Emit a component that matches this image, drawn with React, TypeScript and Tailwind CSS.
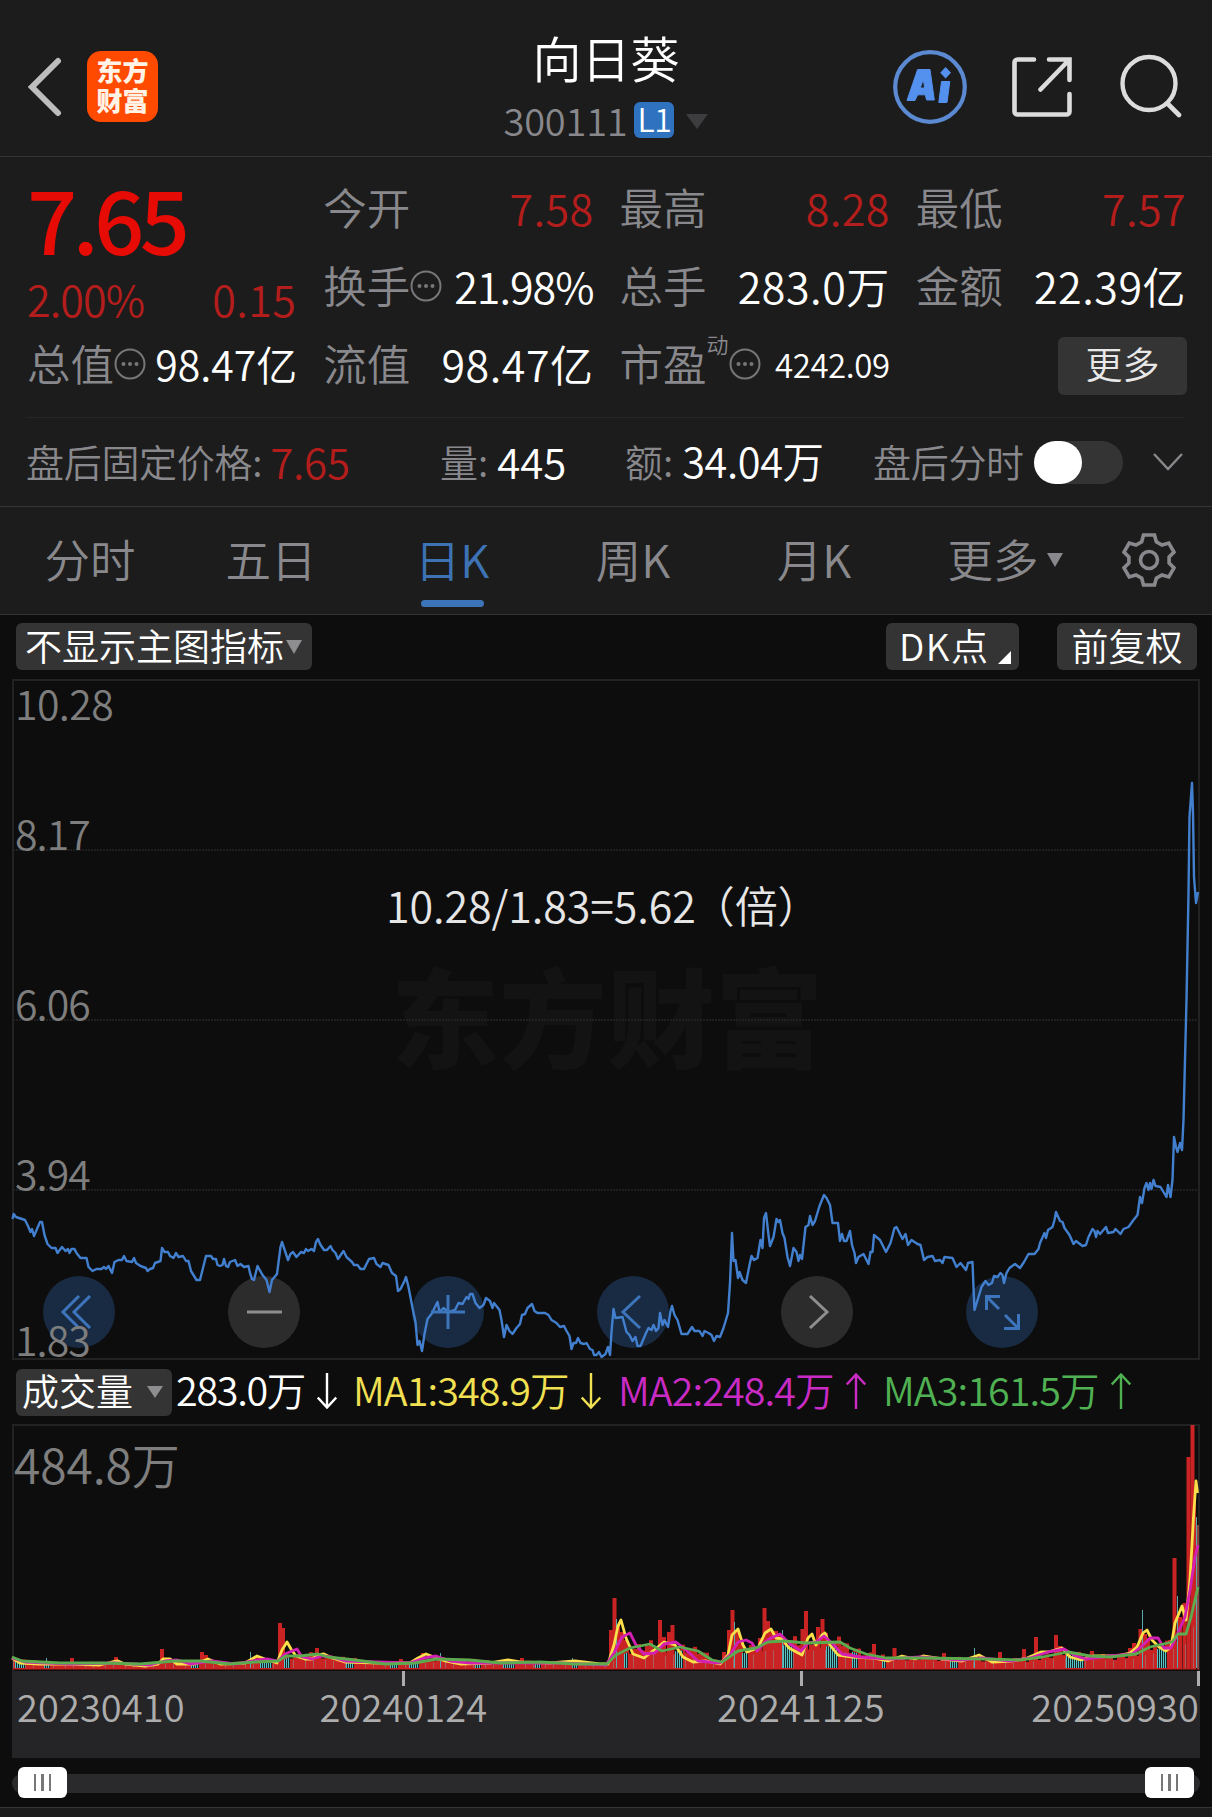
import type { ReactNode } from 'react';
import clsx from 'clsx';

type Point = [number, number];

const PRICE_LINE =
  '12.5,1219 13.7,1214 16,1217 25,1220 28,1226 30.5,1232 32,1229 34,1236 40,1222 42,1222 44.5,1235 47.5,1244 51.5,1248 55.5,1248 57.5,1253 62,1247 65.5,1251 68,1249 69.5,1253 71.5,1249 74.5,1249 76.5,1253 80.5,1258 86.5,1258 88.5,1267 92.5,1271 96.5,1269 101.5,1269 104,1267 106,1269 108.5,1266 112,1273 114.5,1262 118.5,1260 122,1260 124,1256 126.5,1261 132,1262 134,1258 136,1263 140.5,1266 146,1268 147.5,1271 150,1269 153,1268 155,1263 160.5,1261 162,1248 164.5,1252 168,1252 170,1256 173.5,1258 176,1253 178.5,1257 183,1256 186,1261 188.5,1261 191,1271 196.5,1280 200,1280 206,1256 211,1256 213,1259 216,1259 217.5,1265 220,1266 222.5,1265 224,1259 226,1266 228,1267 230,1262 235,1260 237.5,1266 240.5,1264 244,1267 248.5,1266 250,1273 252,1279 254,1280 257.5,1266 262.5,1275 266.5,1280 269.5,1292 272,1280 277,1274 280.5,1247 282,1242 285,1251 288,1260 290.5,1254 293,1252 296.5,1257 301,1252 304,1253 306,1249 308,1251 311.5,1249 314,1251 316,1242 318,1239 320,1244 324,1250 327,1250 330.5,1246 332.5,1250 335.5,1253 338,1259 343.5,1251 346.5,1257 352,1262 354,1265 357.5,1265 360.5,1269 364,1269 369,1259 374,1258 376.5,1264 380.5,1267 382.5,1263 388.5,1265 392,1273 396,1276 398,1291 400.5,1289 404.5,1281 406,1277 408.5,1287 412.5,1308 415.5,1322 417.5,1345 419.5,1341 422,1351 424.5,1334 427.5,1319 431.5,1314 437.5,1302 439.5,1312 443.5,1308 448.5,1312 455,1310 458.5,1303 462.5,1304 466.5,1297 468.5,1299 470,1294 472.5,1294 475.5,1303 479.5,1308 483.5,1305 486,1298 490,1301 492.5,1308 494,1303 499.5,1310 501.5,1320 504,1337 506.5,1325 509.5,1331 512.5,1334 516.5,1328 520,1324 522,1315 525,1314 527.5,1308 532,1304 534.5,1311 537.5,1313 545,1313 548.5,1315 551.5,1320 556.5,1323 560,1327 564,1326 566,1330 569.5,1336 571.5,1349 573.5,1343 576,1343 578,1338 580.5,1343 584,1344 586.5,1343 590,1349 592.5,1350 594,1355 596.5,1355 599,1352 601.5,1357 605.5,1354 608,1347 610,1355 611.5,1332 613.5,1309 615.5,1318 622.5,1317 626.5,1332 629.5,1335 632.5,1341 635.5,1337 637.5,1346 640.5,1346 646,1333 648.5,1328 651.5,1330 653.5,1325 656,1331 658.5,1328 660,1313 662.5,1325 664.5,1320 668,1327 670.5,1311 672,1306 674.5,1315 677.5,1320 681.5,1334 687.5,1334 692,1327 694.5,1331 699.5,1331 702.5,1336 704.5,1331 708.5,1333 711.5,1335 714,1341 716.5,1336 720,1337 723.5,1328 728,1313 730,1283 732,1233 733.5,1261 735.5,1260 738,1278 739.5,1272 742.5,1280 746,1283 749.5,1265 751.5,1256 754,1260 757.5,1258 760.5,1240 762.5,1248 764,1218 766,1213 768.5,1235 770,1246 773.5,1237 776.5,1219 778.5,1222 780,1220 782.5,1233 784.5,1238 787.5,1257 790,1266 793.5,1248 796.5,1252 798.5,1261 800,1255 802,1259 805.5,1227 808.5,1225 810,1216 812.5,1225 815,1221 819.5,1206 824,1195 826.5,1198 830,1205 832.5,1223 838,1223 840,1241 842,1234 844,1241 846.5,1241 850,1231 852,1245 854.5,1253 856,1263 858.5,1257 863.5,1254 868.5,1264 870.5,1252 872.5,1252 874,1235 880,1240 886,1252 890.5,1243 894.5,1228 896.5,1227 899.5,1233 902.5,1239 905.5,1234 908,1245 911.5,1240 917.5,1244 920.5,1245 924,1260 927.5,1257 932.5,1256 935,1261 940,1260 942.5,1263 944.5,1257 952.5,1258 956.5,1267 960.5,1263 966,1270 968,1263 972.5,1262 973.5,1287 974.5,1310 978.5,1297 981.5,1287 985.5,1281 988.5,1285 992,1283 994,1276 997.5,1277 1000.5,1273 1002.5,1275 1004,1283 1006.5,1273 1009.5,1268 1015,1264 1020,1268 1024,1262 1028.5,1254 1034.5,1254 1038.5,1249 1040,1243 1044.5,1233 1046,1238 1048,1230 1052.5,1227 1054.5,1220 1056,1212 1060,1221 1062.5,1222 1064.5,1228 1069.5,1235 1073.5,1244 1076,1241 1082.5,1246 1086,1245 1088.5,1237 1092.5,1229 1094.5,1231 1096,1237 1097.5,1231 1100,1234 1106,1227 1108,1233 1113.5,1232 1115.5,1229 1120.5,1234 1123.5,1229 1128.5,1227 1133.5,1220 1137.5,1215 1140,1197 1142,1203 1144.5,1188 1146.5,1183 1148.5,1190 1150,1183 1151.5,1189 1153.5,1180 1155.5,1186 1160.5,1187 1163.5,1192 1166.5,1197 1168,1185 1170.5,1197 1172.5,1180 1174,1137 1176,1147 1177.5,1152 1180,1143 1182,1150 1183.5,1120 1186.5,1000 1188.5,893 1189.5,817 1192,783 1193,813 1194,877 1196,903 1198,892';

const MA1: Point[] = [
  [12, 1658], [20, 1663], [40, 1664], [70, 1664], [100, 1665], [112, 1662], [118, 1661], [125, 1664],
  [145, 1666], [158, 1664], [163, 1659], [170, 1659], [177, 1664], [195, 1664], [208, 1659], [220, 1664],
  [245, 1663], [257, 1656], [265, 1659], [277, 1663], [282, 1650], [287, 1642], [291, 1649], [296, 1656],
  [305, 1659], [312, 1659], [318, 1655], [324, 1654], [332, 1658], [345, 1662], [380, 1663], [410, 1663],
  [418, 1658], [426, 1654], [434, 1657], [445, 1661], [460, 1664], [490, 1663], [508, 1660], [520, 1662],
  [550, 1663], [575, 1661], [600, 1664], [608, 1664], [614, 1645], [618, 1626], [621, 1620], [626, 1638],
  [633, 1654], [644, 1658], [654, 1650], [664, 1642], [675, 1645], [683, 1657], [693, 1662], [706, 1661],
  [720, 1664], [728, 1655], [732, 1635], [738, 1629], [743, 1645], [747, 1652], [758, 1648], [765, 1633],
  [771, 1629], [776, 1638], [782, 1639], [789, 1648], [802, 1655], [808, 1638], [812, 1634], [816, 1645],
  [822, 1635], [825, 1633], [830, 1645], [838, 1655], [853, 1657], [873, 1658], [888, 1661], [902, 1656],
  [915, 1659], [923, 1656], [942, 1659], [962, 1661], [979, 1655], [992, 1662], [1012, 1661], [1027, 1658],
  [1041, 1652], [1048, 1652], [1062, 1648], [1070, 1657], [1081, 1660], [1093, 1656], [1116, 1656],
  [1130, 1653], [1137, 1647], [1143, 1633], [1147, 1630], [1152, 1640], [1159, 1647], [1166, 1651],
  [1171, 1647], [1175, 1623], [1182, 1606], [1186, 1620], [1190, 1580], [1193.5, 1517], [1196, 1481],
  [1197.5, 1493],
];

const MA2: Point[] = [
  [12, 1658], [25, 1662], [70, 1664], [115, 1663], [150, 1665], [165, 1661], [177, 1660], [190, 1664],
  [212, 1661], [235, 1664], [258, 1660], [268, 1659], [278, 1661], [285, 1654], [292, 1651], [297, 1649],
  [302, 1657], [312, 1659], [322, 1656], [332, 1657], [345, 1661], [410, 1663], [424, 1658], [436, 1656],
  [450, 1661], [470, 1663], [560, 1663], [606, 1665], [614, 1653], [622, 1637], [630, 1633], [636, 1645],
  [644, 1654], [655, 1653], [664, 1644], [676, 1642], [686, 1650], [698, 1661], [720, 1663], [730, 1655],
  [738, 1642], [746, 1640], [752, 1643], [757, 1651], [764, 1643], [771, 1638], [780, 1634], [790, 1644],
  [801, 1651], [808, 1643], [816, 1642], [824, 1636], [832, 1643], [842, 1654], [860, 1657], [890, 1659],
  [920, 1657], [960, 1660], [982, 1658], [1010, 1661], [1030, 1658], [1048, 1652], [1064, 1649],
  [1076, 1656], [1086, 1659], [1110, 1656], [1132, 1654], [1142, 1646], [1150, 1638], [1158, 1638],
  [1164, 1648], [1171, 1648], [1177, 1635], [1185, 1617], [1190, 1590], [1195, 1557], [1198, 1545],
];

const MA3: Point[] = [
  [12, 1657], [22, 1661], [60, 1663], [100, 1663], [140, 1664], [175, 1661], [200, 1661], [230, 1664],
  [255, 1662], [278, 1661], [286, 1656], [300, 1656], [318, 1654], [328, 1657], [355, 1660], [385, 1664],
  [415, 1663], [436, 1659], [470, 1660], [500, 1663], [540, 1662], [575, 1664], [607, 1664], [616, 1655],
  [630, 1648], [650, 1644], [662, 1651], [680, 1647], [698, 1651], [712, 1660], [722, 1662], [738, 1651],
  [756, 1648], [768, 1642], [784, 1641], [806, 1643], [840, 1642], [850, 1648], [866, 1654], [886, 1658],
  [925, 1658], [985, 1659], [1020, 1660], [1042, 1657], [1068, 1652], [1090, 1656], [1110, 1657],
  [1136, 1654], [1150, 1647], [1172, 1642], [1178, 1634], [1186, 1634], [1191, 1617], [1198, 1587],
];

// x, y of the top edge
const RED_SPIKES: Point[] = [
  [72, 1658], [116, 1657], [162, 1649], [202, 1652], [206, 1655], [257, 1656], [280, 1623], [283, 1628],
  [317, 1648], [401, 1659], [423, 1653], [522, 1658], [611, 1630], [614.5, 1598], [618, 1625], [622, 1632],
  [626, 1640], [660, 1620], [664, 1637], [669, 1632], [672.5, 1625], [724, 1652], [729, 1630],
  [732.5, 1610], [737, 1630], [741, 1640], [760, 1638], [764.5, 1608], [768, 1621], [772, 1632],
  [776, 1631], [780, 1636], [802.5, 1629], [806, 1611], [818, 1627], [822.5, 1619], [826, 1633],
  [874, 1644], [894.5, 1648], [944, 1653], [1000, 1652], [1024, 1649], [1036, 1637], [1056, 1635],
  [1060, 1646], [1092, 1651], [1130, 1648], [1134, 1643], [1140.5, 1629], [1145, 1634], [1148, 1638],
  [1170, 1640], [1174.5, 1558], [1180, 1617], [1184.5, 1603], [1188.5, 1457], [1192.5, 1425],
];

const TEAL_SPIKES: Point[] = [
  [46, 1658], [250.5, 1652], [440, 1653], [572, 1658], [616.5, 1619], [734.5, 1622], [782.5, 1630],
  [974, 1648], [1142.5, 1610], [1177, 1596], [1196.3, 1517],
];

const TEAL_RUNS: Point[] = [
  [15, 24], [44, 50], [191, 198], [260, 271], [284, 289], [346, 354], [390, 398], [409, 418], [475, 480],
  [503, 514], [535, 541], [572, 578], [624, 628], [675, 682], [742, 747], [783, 792], [826, 837],
  [852, 858], [882, 886], [950, 958], [1066, 1083], [1157, 1167],
];

const CHART_BUTTONS: { name: string; active: boolean; icon: ReactNode }[] = [
  { name: 'first', active: true, icon: <path d="M36 20 20 36l16 16M47 20 31 36l16 16" /> },
  { name: 'zoom-out', active: false, icon: <path d="M19 36h35" /> },
  { name: 'zoom-in', active: true, icon: <path d="M19 36h34M36 19v34" /> },
  { name: 'prev', active: true, icon: <path d="M43 20 26 36l17 16" /> },
  { name: 'next', active: false, icon: <path d="M29 20 46 36 29 52" /> },
  {
    name: 'expand',
    active: true,
    icon: <path d="M20.500 34V20.500H34M21 21 33 33M39 39 52 52M38 52.500H52.500V38" />,
  },
];

const TABS = ['分时', '五日', '日K', '周K', '月K'];

const toPoints = (pts: Point[]) => pts.map((p) => p.join(',')).join(' ');

function heightAt(x: number) {
  const i = MA3.findIndex((p) => p[0] >= x);
  if (i <= 0) return 10;
  const [x0, y0] = MA3[i - 1];
  const [x1, y1] = MA3[i];
  return 1669 - (y0 + ((y1 - y0) * (x - x0)) / (x1 - x0));
}

function Caret({ className }: { className?: string }) {
  return (
    <svg viewBox="0 0 16 14" preserveAspectRatio="none" className={clsx('shrink-0', className)}>
      <path d="M0 0h16L8 14z" fill="currentColor" />
    </svg>
  );
}

function More() {
  return (
    <svg viewBox="0 0 32 32" className="mt-[2px] h-8 w-8 shrink-0 text-[#77777a]">
      <circle cx="16" cy="16" r="14.500" fill="none" stroke="currentColor" strokeWidth="2" />
      <circle cx="9.500" cy="16" r="2" fill="currentColor" />
      <circle cx="16" cy="16" r="2" fill="currentColor" />
      <circle cx="22.500" cy="16" r="2" fill="currentColor" />
    </svg>
  );
}

function Arrow({ up }: { up?: boolean }) {
  return (
    <svg viewBox="0 0 20 36" className={clsx('mt-[4px] ml-[12px] h-9 w-5 shrink-0', up && 'rotate-180')}>
      <path d="M10 0v34M.800 24.500 10 34.500l9.200-10" fill="none" stroke="currentColor" strokeWidth="2.400" />
    </svg>
  );
}

function Stat({
  label,
  value,
  more,
  valueClass = 'text-white text-[43px] tracking-[0.5px]',
}: {
  label: ReactNode;
  value: string;
  more?: boolean;
  valueClass?: string;
}) {
  return (
    <div className="flex h-[78px] items-center whitespace-nowrap">
      <span className="flex text-[43.500px] text-[#89898d]">{label}</span>
      {more && <More />}
      <span className={clsx('-mr-[1px] ml-auto', valueClass)}>{value}</span>
    </div>
  );
}

function Header() {
  return (
    <header className="flex h-[157px] items-start justify-between border-b border-[#343434]">
      <div className="flex w-[360px] pt-[51px] pl-[27px]">
        <svg viewBox="0 0 36 60" className="mt-[6px] h-[60px] w-9">
          <path d="M31 4 5 30l26 26" fill="none" stroke="#bdbdbd" strokeWidth="6" strokeLinecap="round" />
        </svg>
        <div className="ml-6 flex h-[71px] w-[71px] flex-col items-center rounded-[14px] bg-[#ff4a00] pt-[6px] text-[26px] font-black text-[#fff3e8]">
          <span className="h-[30px]">东方</span>
          <span>财富</span>
        </div>
      </div>
      <div className="flex flex-col items-center pt-[32px]">
        <h1 className="text-[49px] font-[350] text-white">向日葵</h1>
        <div className="mt-[20px] flex items-center">
          <span className="text-[38px] tracking-[-0.2px] text-[#88888c]">300111</span>
          <span className="ml-[7px] flex h-9 w-10 items-center justify-center rounded-md bg-[#2f73c0] pb-[4px] text-[32px] tracking-[-0.5px] text-white">
            L1
          </span>
          <Caret className="mt-[2px] ml-3 h-[15px] w-[22px] text-[#3d3d3f]" />
        </div>
      </div>
      <div className="flex w-[360px] justify-end pt-[49px] pr-[29px]">
        <svg viewBox="0 0 76 76" className="h-[76px] w-[76px]">
          <circle cx="38" cy="38" r="34.800" fill="none" stroke="#5b8ad3" strokeWidth="4.200" />
          <g fill="#5490ee" stroke="#5490ee" strokeLinejoin="round">
            <path
              d="M25.600 20.500H38L42.300 51H34.600L33.300 45.800H25.600L23 51.500H15zM31.300 30 28.300 39H32.600z"
              fillRule="evenodd"
            />
            <path d="M49.500 32.500H57.800L55 53.500H46.800z" />
            <path d="M53.600 18 59 23.800 53.600 29.600 48.200 23.800z" strokeWidth="0" />
          </g>
        </svg>
        <svg viewBox="0 0 60 60" className="mt-[8px] ml-[44px] h-[60px] w-[60px]">
          <path
            d="M22 2.500H5.500a3 3 0 0 0-3 3v49a3 3 0 0 0 3 3h49a3 3 0 0 0 3-3V37M37 2.500h20.500V23M57 3 28.500 32.500"
            fill="none"
            stroke="#dcdcdc"
            strokeWidth="4.600"
            strokeLinecap="round"
          />
        </svg>
        <svg viewBox="0 0 64 64" className="mt-[5px] ml-[47px] h-16 w-16">
          <circle cx="30" cy="29.500" r="26.500" fill="none" stroke="#dcdcdc" strokeWidth="4.400" />
          <path d="M48.500 49.500 60 61" stroke="#dcdcdc" strokeWidth="4.600" strokeLinecap="round" />
        </svg>
      </div>
    </header>
  );
}

function Quote() {
  const red = 'text-[#b31d1b] text-[43px] tracking-[0.4px]';
  return (
    <section className="h-[350px] border-b border-[#343434] px-[27px] pt-[11px]">
      <div className="grid grid-cols-4 gap-x-[27px]">
        <div className="row-span-2">
          <div className="pt-[5px] text-[88px] font-medium tracking-[-4.600px] text-[#e60b05]">7.65</div>
          <div className="mt-[16px] flex justify-between text-[43px] tracking-[-0.9px] text-[#b31d1b]">
            <span>2.00%</span>
            <span className="tracking-[0.4px]">0.15</span>
          </div>
        </div>
        <Stat label="今开" value="7.58" valueClass={red} />
        <Stat label="最高" value="8.28" valueClass={red} />
        <Stat label="最低" value="7.57" valueClass={red} />
        <Stat label="换手" value="21.98%" more valueClass="text-white text-[43px] tracking-[-1px]" />
        <Stat label="总手" value="283.0万" />
        <Stat label="金额" value="22.39亿" />
        <Stat label="总值" value="98.47亿" more valueClass="text-white text-[41px]" />
        <Stat label="流值" value="98.47亿" />
        <Stat
          label={
            <>
              市盈<sup className="top-0 -mt-[9px] text-[22px] leading-none">动</sup>
            </>
          }
          value="4242.09"
          more
          valueClass="text-white text-[33px] tracking-[-0.4px] pt-[2px]"
        />
        <div className="flex h-[78px] items-center justify-end">
          <button className="mt-[6px] -mr-[2px] h-[58px] w-[129px] rounded-md bg-[#343434] pb-[5px] text-[37px] text-[#e8e8e8]">
            更多
          </button>
        </div>
      </div>
      <div className="mt-[15px] flex h-[86px] items-center border-t border-[#272727] text-[38px] whitespace-nowrap text-[#89898d]">
        <div className="-ml-[1px] flex w-[414px] items-center">
          <span className="tracking-[-0.3px]">盘后固定价格:</span>
          <span className="ml-[8px] text-[42px] tracking-[-0.2px] text-[#b31d1b]">7.65</span>
        </div>
        <div className="flex w-[185px] items-center">
          量:<span className="ml-[9px] text-[42px] text-white">445</span>
        </div>
        <div className="flex w-[248px] items-center">
          额:<span className="ml-[9px] text-[41.500px] tracking-[-0.4px] text-white">34.04万</span>
        </div>
        <span className="w-[161px] tracking-[-0.3px]">盘后分时</span>
        <div className="mt-[4px] h-[43px] w-[89px] shrink-0 rounded-full bg-[#343434]">
          <div className="h-[43px] w-[48px] rounded-full bg-white" />
        </div>
        <svg viewBox="0 0 30 18" className="mt-[2px] ml-[30px] h-[18px] w-[30px] shrink-0">
          <path d="M1 1 15 16 29 1" fill="none" stroke="#89898d" strokeWidth="2.400" />
        </svg>
      </div>
    </section>
  );
}

function Tabs() {
  return (
    <nav className="flex h-[108px] border-b border-[#343434] text-[45.500px] text-[#89898d]">
      {TABS.map((tab) => (
        <div
          key={tab}
          className={clsx('flex w-[181px] flex-col items-center pt-[29px] pr-px', tab === '日K' && 'text-[#3d73b5]')}
        >
          {tab}
          {tab === '日K' && <span className="mt-[18px] h-[7px] w-[63px] rounded-full bg-[#3c74b9]" />}
        </div>
      ))}
      <div className="flex w-[181px] justify-center pt-[29px] pl-[19px]">
        更多
        <Caret className="mt-[17px] ml-2 h-[14px] w-4" />
      </div>
      <svg viewBox="0 0 54 54" className="mt-[26px] ml-[36px] h-[54px] w-[54px]">
        <g fill="none" stroke="#89898d" strokeWidth="3.600">
          <path d="M21.500 2h11l1.800 6.800 5.700 3.300 6.800-2 5.200 9-4.900 4.900v6l4.900 4.900-5.200 9-6.800-2-5.700 3.300-1.800 6.800h-11l-1.800-6.800-5.700-3.300-6.800 2-5.200-9 4.900-4.900v-6L2 19.100l5.200-9 6.800 2 5.700-3.300z" />
          <circle cx="27" cy="27" r="8.500" />
        </g>
      </svg>
    </nav>
  );
}

function PriceChart() {
  return (
    <>
      <div className="flex h-[64px] pt-[8px] pl-[16px] text-[37px] text-white">
        <button className="flex h-[47px] w-[296px] items-center rounded-md bg-[#343434] pb-[3px] pl-[9px]">
          不显示主图指标
          <Caret className="mt-[4px] ml-[2px] h-[14px] w-4 text-[#8e8e90]" />
        </button>
        <button className="ml-[574px] flex h-[47px] w-[133px] items-center rounded-md bg-[#343434] pb-[3px] pl-[13px]">
          <span className="tracking-[1.500px]">DK</span>点
          <svg viewBox="0 0 13 13" className="mt-[24px] ml-[10px] h-[13px] w-[13px] shrink-0">
            <path d="M13 0v13H0z" fill="#fff" />
          </svg>
        </button>
        <button className="ml-[38px] h-[47px] w-[140px] rounded-md bg-[#343434] pb-[3px]">前复权</button>
      </div>
      <div className="relative mx-[12px] h-[681px] border-2 border-[#222223] text-[41px] tracking-[-0.9px] text-[#7e7e7e]">
        <div className="absolute top-[278px] left-[377px] text-[108px] font-black tracking-normal text-[#131313]">
          东方财富
        </div>
        <svg viewBox="14 681 1184 677" className="absolute inset-0 h-[677px] w-[1184px] overflow-visible">
          {[850, 1020, 1190].map((y) => (
            <path key={y} d={`M13 ${y}H1198`} stroke="#262626" strokeWidth="1.500" strokeDasharray="2 1" />
          ))}
        </svg>
        <div className="absolute top-[595px] left-[29px] flex gap-[112.500px]">
          {CHART_BUTTONS.map((b) => (
            <div
              key={b.name}
              className={clsx('h-[72px] w-[72px] rounded-full', b.active ? 'bg-[#182b42]' : 'bg-[#2c2c2c]')}
            />
          ))}
        </div>
        <svg viewBox="14 681 1184 677" className="absolute inset-0 h-[677px] w-[1184px] overflow-visible">
          <polyline points={PRICE_LINE} fill="none" stroke="#4280cf" strokeWidth="2.400" strokeLinejoin="round" />
        </svg>
        <div className="absolute top-[595px] left-[29px] flex gap-[112.500px]">
          {CHART_BUTTONS.map((b) => (
            <svg
              key={b.name}
              viewBox="0 0 72 72"
              className={clsx('h-[72px] w-[72px]', b.active ? 'text-[#3c75bb]' : 'text-[#8e8e90]')}
            >
              <g fill="none" stroke="currentColor" strokeWidth="3">
                {b.icon}
              </g>
            </svg>
          ))}
        </div>
        <span className="absolute top-[1px] left-[1px] tracking-[-0.6px]">10.28</span>
        <span className="absolute top-[131px] left-[1px]">8.17</span>
        <span className="absolute top-[301px] left-[1px]">6.06</span>
        <span className="absolute top-[471px] left-[1px]">3.94</span>
        <span className="absolute top-[637px] left-[1px]">1.83</span>
        <div className="absolute top-[202px] left-[372px] flex text-[43px] tracking-[-0.1px] whitespace-nowrap text-[#e6e6e6]">
          10.28/1.83=5.62<span className="-ml-[4px]">（倍）</span>
        </div>
      </div>
    </>
  );
}

function VolumeChart() {
  const days = Array.from({ length: 296 }, (_, i) => 13 + i * 4);
  return (
    <>
      <div className="flex h-[64px] items-start pt-[9px] pl-[16px] text-[39.500px] tracking-[-0.900px] whitespace-nowrap">
        <button className="flex h-[47px] w-[156px] items-center rounded-md bg-[#343434] pb-[4px] pl-[6px] text-[37px] tracking-normal text-white">
          成交量
          <Caret className="mt-[3px] ml-[14px] h-3 w-4 text-[#8e8e90]" />
        </button>
        <div className="flex w-[181px] pl-[4px] tracking-[-1.300px] text-white">
          283.0万
          <Arrow />
        </div>
        <div className="flex w-[265px] text-[#f0e052]">
          MA1:348.9万
          <Arrow />
        </div>
        <div className="flex w-[265px] text-[#c92bc4]">
          MA2:248.4万
          <Arrow up />
        </div>
        <div className="flex text-[#4fb152]">
          MA3:161.5万
          <Arrow up />
        </div>
      </div>
      <div className="relative mx-[12px] h-[247px] border-2 border-b-0 border-[#222223] text-[#7e7e7e]">
        <span className="absolute top-[13px] left-0 text-[48px] tracking-[-0.1px]">484.8万</span>
        <svg viewBox="14 1426 1184 245" className="absolute inset-0 h-[245px] w-[1184px] overflow-visible">
          <g fill="#c92423">
            {days
              .filter((x) => x < 1180)
              .map((x, i) => {
                const h = heightAt(x) * (0.75 + ((i * 37) % 11) / 22);
                return <rect key={x} x={x} y={1669 - h} width="4" height={h} />;
              })}
            {RED_SPIKES.map(([x, y]) => (
              <rect key={x} x={x - 2} y={y} width="4" height={1669 - y} />
            ))}
            <rect x="1194" y="1500" width="2" height="169" />
          </g>
          <rect x="1197" y="1525" width="2" height="144" fill="#8a4545" />
          {days
            .filter((_, i) => (i * 7) % 5 < 2)
            .map((x) => (
              <path key={x} d={`M${x + 0.5} 1668V${1669 - heightAt(x) * 0.7}`} stroke="#a8605c" />
            ))}
          {TEAL_RUNS.map(([from, to]) =>
            Array.from({ length: Math.ceil((to - from) / 2) }, (_, i) => {
              const x = Math.round(from + i * 2);
              const top = 1669 - heightAt(x) * 0.85;
              return (
                <g key={x}>
                  <rect x={x} y={top} width="2" height={1668 - top} fill="#14282a" />
                  <rect x={x} y={top} width="1" height={1668 - top} fill="#5ac3c5" />
                </g>
              );
            }),
          )}
          {TEAL_SPIKES.map(([x, y]) => (
            <path key={x} d={`M${Math.floor(x) + 0.5} ${y}V1668`} stroke="#5aa9ac" />
          ))}
          <g fill="none" strokeWidth="2.800" strokeLinejoin="round">
            <polyline points={toPoints(MA1)} stroke="#fbe04a" />
            <polyline points={toPoints(MA2)} stroke="#d41fb4" />
            <polyline points={toPoints(MA3)} stroke="#5cab4f" />
          </g>
          <path d="M12 1669.500H1199" stroke="#6b1512" />
        </svg>
      </div>
    </>
  );
}

function Axis() {
  return (
    <div className="mx-[12px] h-[87px] bg-[#252527] text-[38px] tracking-[0.100px] text-[#adadad]">
      <div className="flex h-[15px]">
        <i className="ml-[389.500px] w-[3px] bg-[#adadad]" />
        <i className="ml-[395px] w-[3px] bg-[#adadad]" />
        <i className="ml-auto w-[3px] bg-[#adadad]" />
      </div>
      <div className="flex pt-px pl-[5px]">
        <span className="w-[302.500px]">20230410</span>
        <span className="w-[397.500px]">20240124</span>
        <span>20241125</span>
        <span className="mr-[1px] ml-auto">20250930</span>
      </div>
    </div>
  );
}

function Thumb() {
  return (
    <div className="flex h-[31px] w-[49px] -translate-y-px items-center justify-center gap-[5px] rounded-md bg-white">
      <i className="h-[17px] w-[2.500px] bg-[#77777a]" />
      <i className="h-[17px] w-[2.500px] bg-[#77777a]" />
      <i className="h-[17px] w-[2.500px] bg-[#77777a]" />
    </div>
  );
}

export default function App() {
  return (
    <div className="h-[1817px] w-[1212px] overflow-hidden bg-[#1c1c1c] font-['Noto_Sans_CJK_SC',sans-serif] leading-none font-[350]">
      <Header />
      <Quote />
      <Tabs />
      <main className="h-[1192px] bg-[#0d0d0d]">
        <PriceChart />
        <VolumeChart />
        <Axis />
        <div className="mx-[12px] mt-[16px] flex h-[19px] items-center justify-between rounded-full bg-[#2a2a2c] px-[6px]">
          <Thumb />
          <Thumb />
        </div>
      </main>
      <div className="h-[10px] border-t border-[#343434]" />
    </div>
  );
}
